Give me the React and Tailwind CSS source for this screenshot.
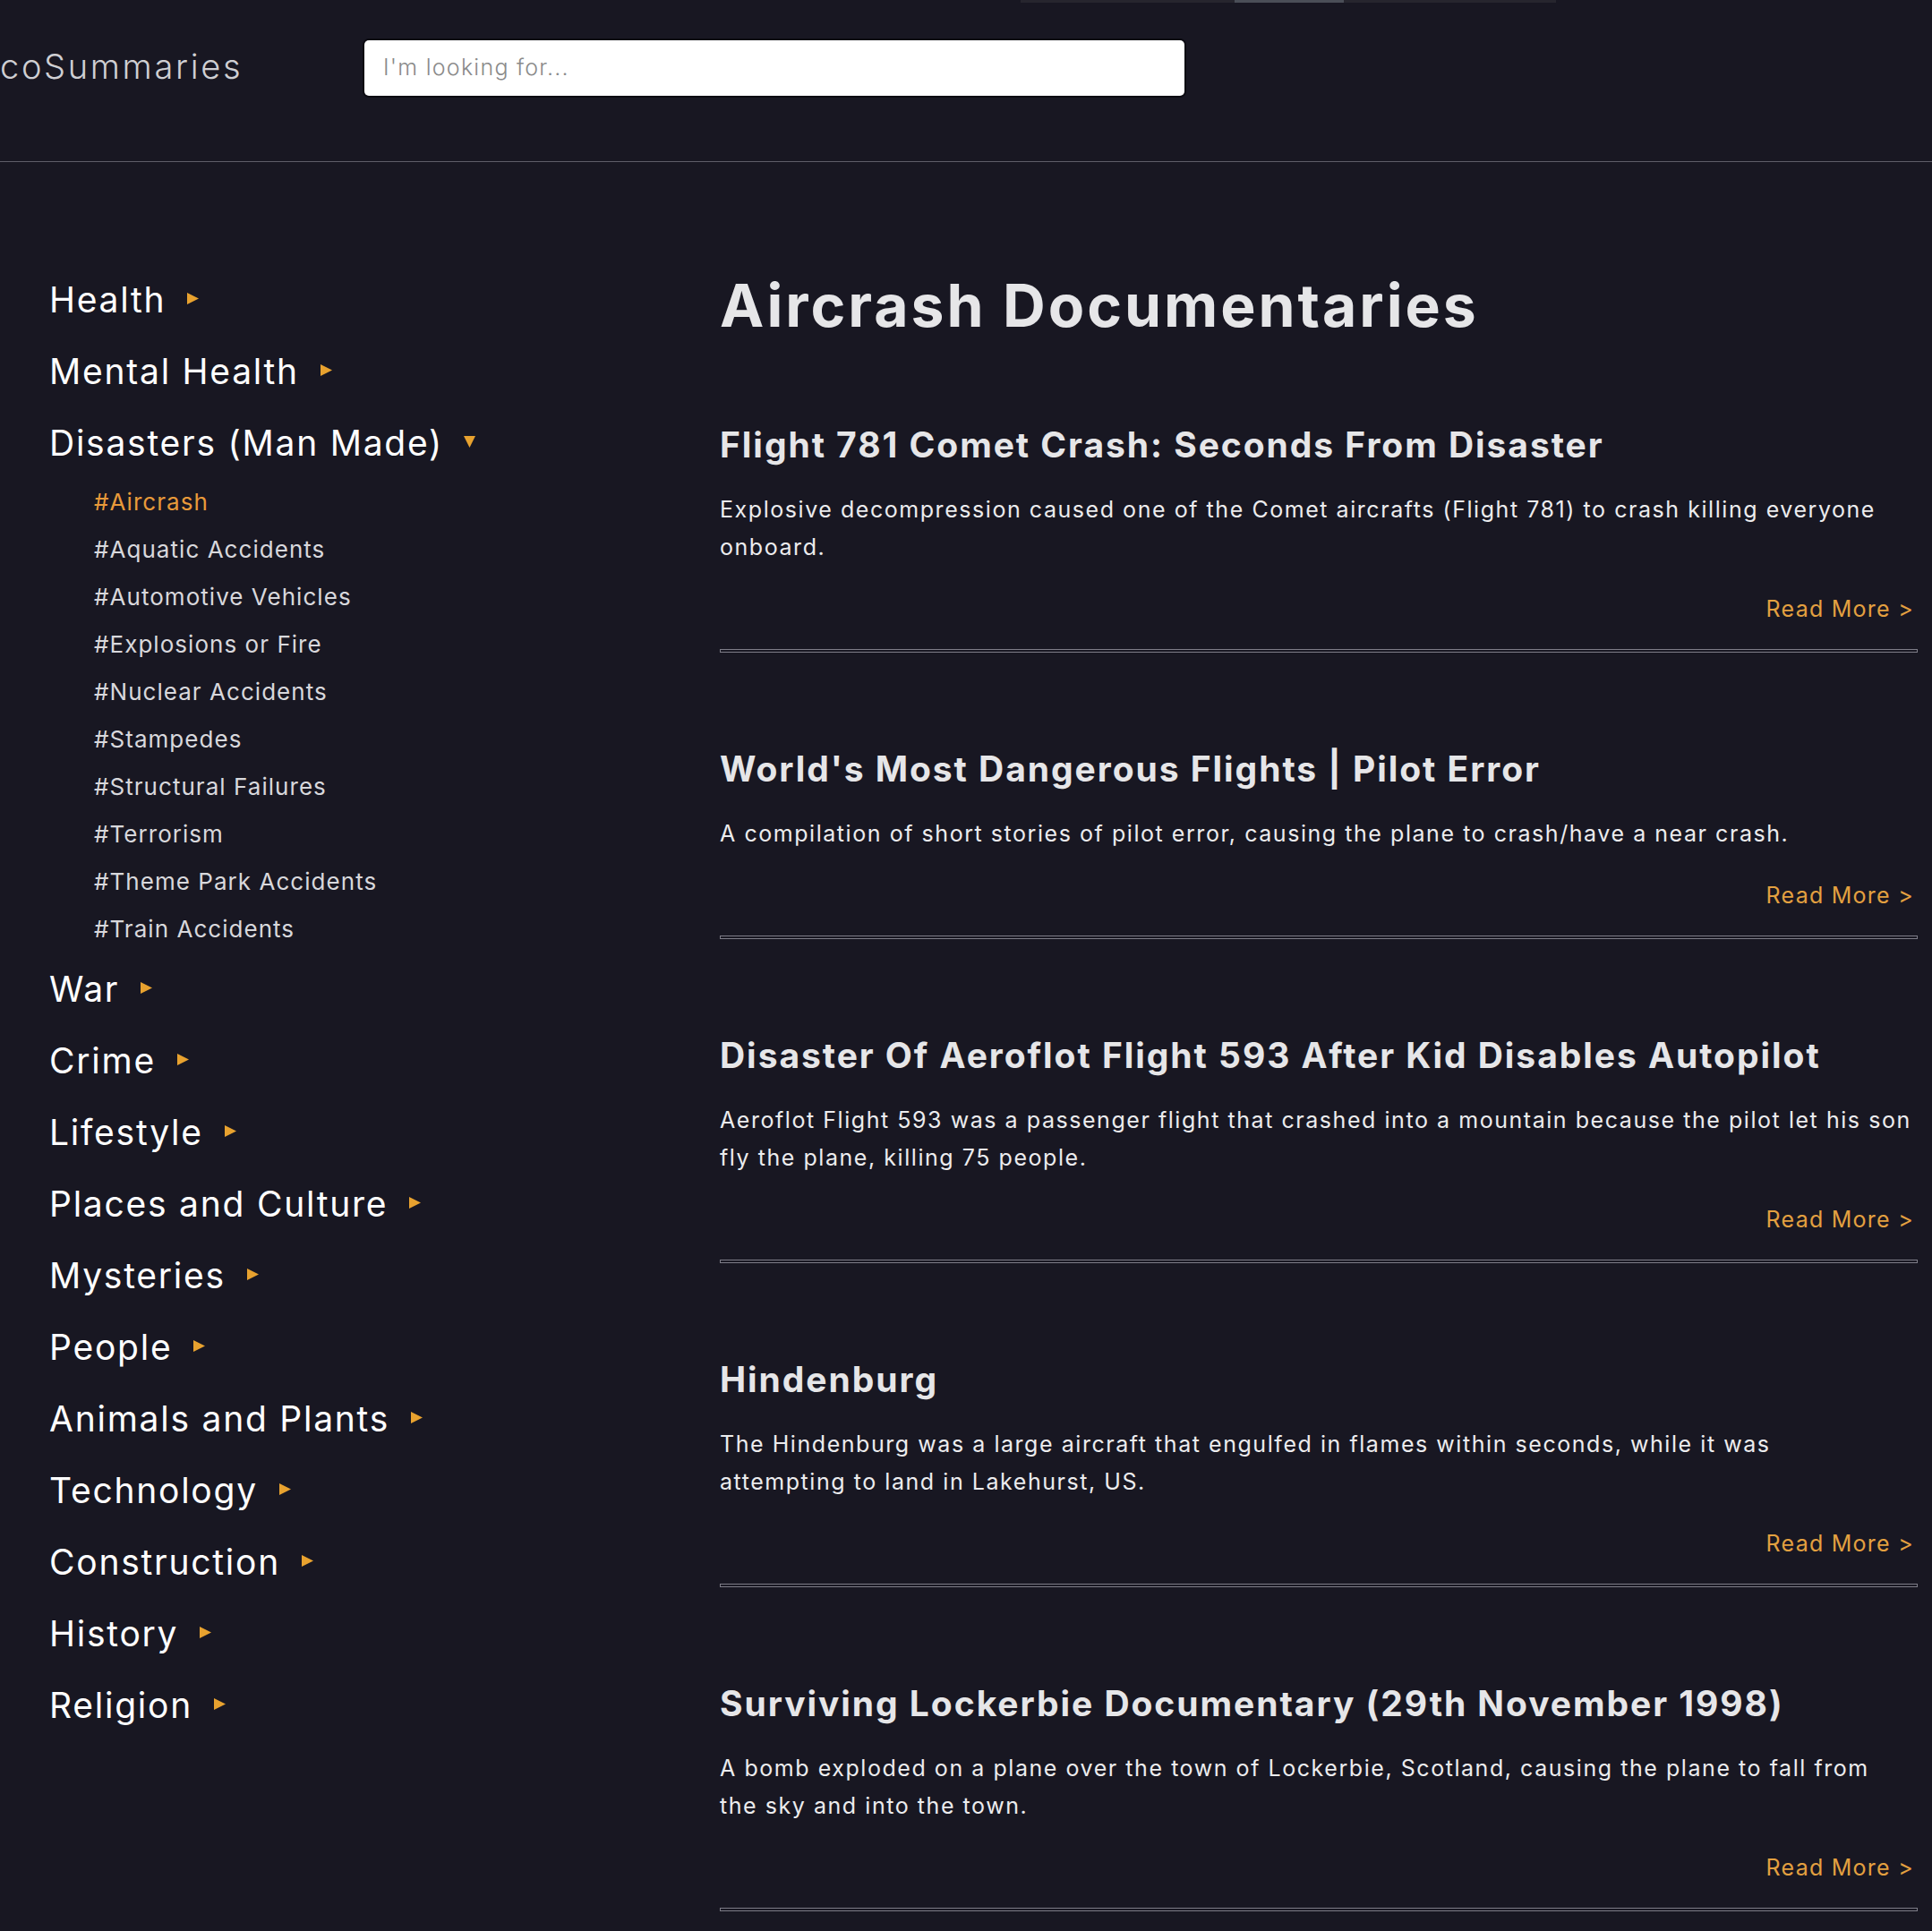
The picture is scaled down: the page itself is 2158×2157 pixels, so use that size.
import React from 'react';

const categories = [
  { name: 'Health' },
  { name: 'Mental Health' },
  {
    name: 'Disasters (Man Made)',
    open: true,
    tags: [
      '#Aircrash',
      '#Aquatic Accidents',
      '#Automotive Vehicles',
      '#Explosions or Fire',
      '#Nuclear Accidents',
      '#Stampedes',
      '#Structural Failures',
      '#Terrorism',
      '#Theme Park Accidents',
      '#Train Accidents',
    ],
  },
  { name: 'War' },
  { name: 'Crime' },
  { name: 'Lifestyle' },
  { name: 'Places and Culture' },
  { name: 'Mysteries' },
  { name: 'People' },
  { name: 'Animals and Plants' },
  { name: 'Technology' },
  { name: 'Construction' },
  { name: 'History' },
  { name: 'Religion' },
];

// line breaks kept as in the original layout
const articles = [
  {
    title: 'Flight 781 Comet Crash: Seconds From Disaster',
    lines: [
      'Explosive decompression caused one of the Comet aircrafts (Flight 781) to crash killing everyone',
      'onboard.',
    ],
  },
  {
    title: "World's Most Dangerous Flights | Pilot Error",
    lines: ['A compilation of short stories of pilot error, causing the plane to crash/have a near crash.'],
  },
  {
    title: 'Disaster Of Aeroflot Flight 593 After Kid Disables Autopilot',
    lines: [
      'Aeroflot Flight 593 was a passenger flight that crashed into a mountain because the pilot let his son',
      'fly the plane, killing 75 people.',
    ],
  },
  {
    title: 'Hindenburg',
    lines: [
      'The Hindenburg was a large aircraft that engulfed in flames within seconds, while it was',
      'attempting to land in Lakehurst, US.',
    ],
  },
  {
    title: 'Surviving Lockerbie Documentary (29th November 1998)',
    lines: [
      'A bomb exploded on a plane over the town of Lockerbie, Scotland, causing the plane to fall from',
      'the sky and into the town.',
    ],
  },
];

const Arrow = ({ open }) =>
  open ? (
    <svg width="15" height="15" viewBox="0 0 15 15" className="ml-[22px] mb-[1px] shrink-0">
      <polygon points="1,1 14,1 7.5,14" fill="#e8a22f" />
    </svg>
  ) : (
    <svg width="13" height="13" viewBox="0 0 13 13" className="ml-[24px] mb-[1px] shrink-0">
      <polygon points="0,0 13,6.5 0,13" fill="#e8a22f" />
    </svg>
  );

export default function App() {
  return (
    <div className="relative min-h-screen bg-[#181722] text-[#e4e4e6] font-['Inter',sans-serif] overflow-hidden">
      {/* top strip */}
      <div className="absolute top-0 left-[1140px] w-[598px] h-[3px] bg-[#26252e]">
        <div className="ml-[239px] w-[122px] h-[3px] bg-[#4a4e57]" />
      </div>

      {/* header */}
      <header className="h-[181px] border-b border-[#5e5d68] flex items-start">
        <div className="w-[407px] pt-[50px] text-[38px] font-light tracking-[0.07em] text-[#cfcfd3] leading-[48px] whitespace-nowrap">
          coSummaries
        </div>
        <div className="mt-[45px] w-[916px] h-[62px] bg-white rounded-[5px] shadow-[0_0_0_2px_#0c0b12] flex items-center pl-[21px]">
          <span className="text-[25px] tracking-[0.05em] text-[#8a8a8a] font-light">I'm looking for...</span>
        </div>
      </header>

      <div className="flex">
        {/* sidebar */}
        <aside className="w-[804px] shrink-0 pl-[55px] pt-[113px]">
          {categories.map((c) => (
            <div key={c.name}>
              <div className="h-[80px] flex items-center">
                <span className="text-[39px] tracking-[0.045em] text-white leading-none">{c.name}</span>
                <Arrow open={c.open} />
              </div>
              {c.tags && (
                <ul className="pl-[50px]">
                  {c.tags.map((t, i) => (
                    <li
                      key={t}
                      className={`h-[53px] flex items-center text-[26px] tracking-[0.04em] ${
                        i === 0 ? 'text-[#e89a3a]' : 'text-[#d8d8dc]'
                      }`}
                    >
                      {t}
                    </li>
                  ))}
                </ul>
              )}
            </div>
          ))}
        </aside>

        {/* main */}
        <main className="flex-1 pr-[16px] pt-[120px] pb-[40px]">
          <h1 className="text-[66px] font-bold leading-[80px] tracking-[0.045em] text-[#e6e6e8] whitespace-nowrap">
            Aircrash Documentaries
          </h1>
          <div className="mt-[91px]">
            {articles.map((a, i) => (
              <article key={a.title} className={i === 0 ? '' : 'mt-[105px]'}>
                <h2 className="text-[39px] font-bold leading-[50px] tracking-[0.05em] text-[#e6e6e8] whitespace-nowrap">
                  {a.title}
                </h2>
                <p className="mt-[26px] text-[25px] leading-[42px] tracking-[0.062em] text-[#ececee]">
                  {a.lines.map((l) => (
                    <span key={l} className="block whitespace-nowrap">
                      {l}
                    </span>
                  ))}
                </p>
                <div className="mt-[30px] text-right pr-[4px]">
                  <a className="text-[25px] leading-[36px] tracking-[0.05em] text-[#e3a040]">Read More &gt;</a>
                </div>
                <hr className="mt-[27px] h-[4px] border border-[#7e7d88] bg-transparent" />
              </article>
            ))}
          </div>
        </main>
      </div>
    </div>
  );
}
